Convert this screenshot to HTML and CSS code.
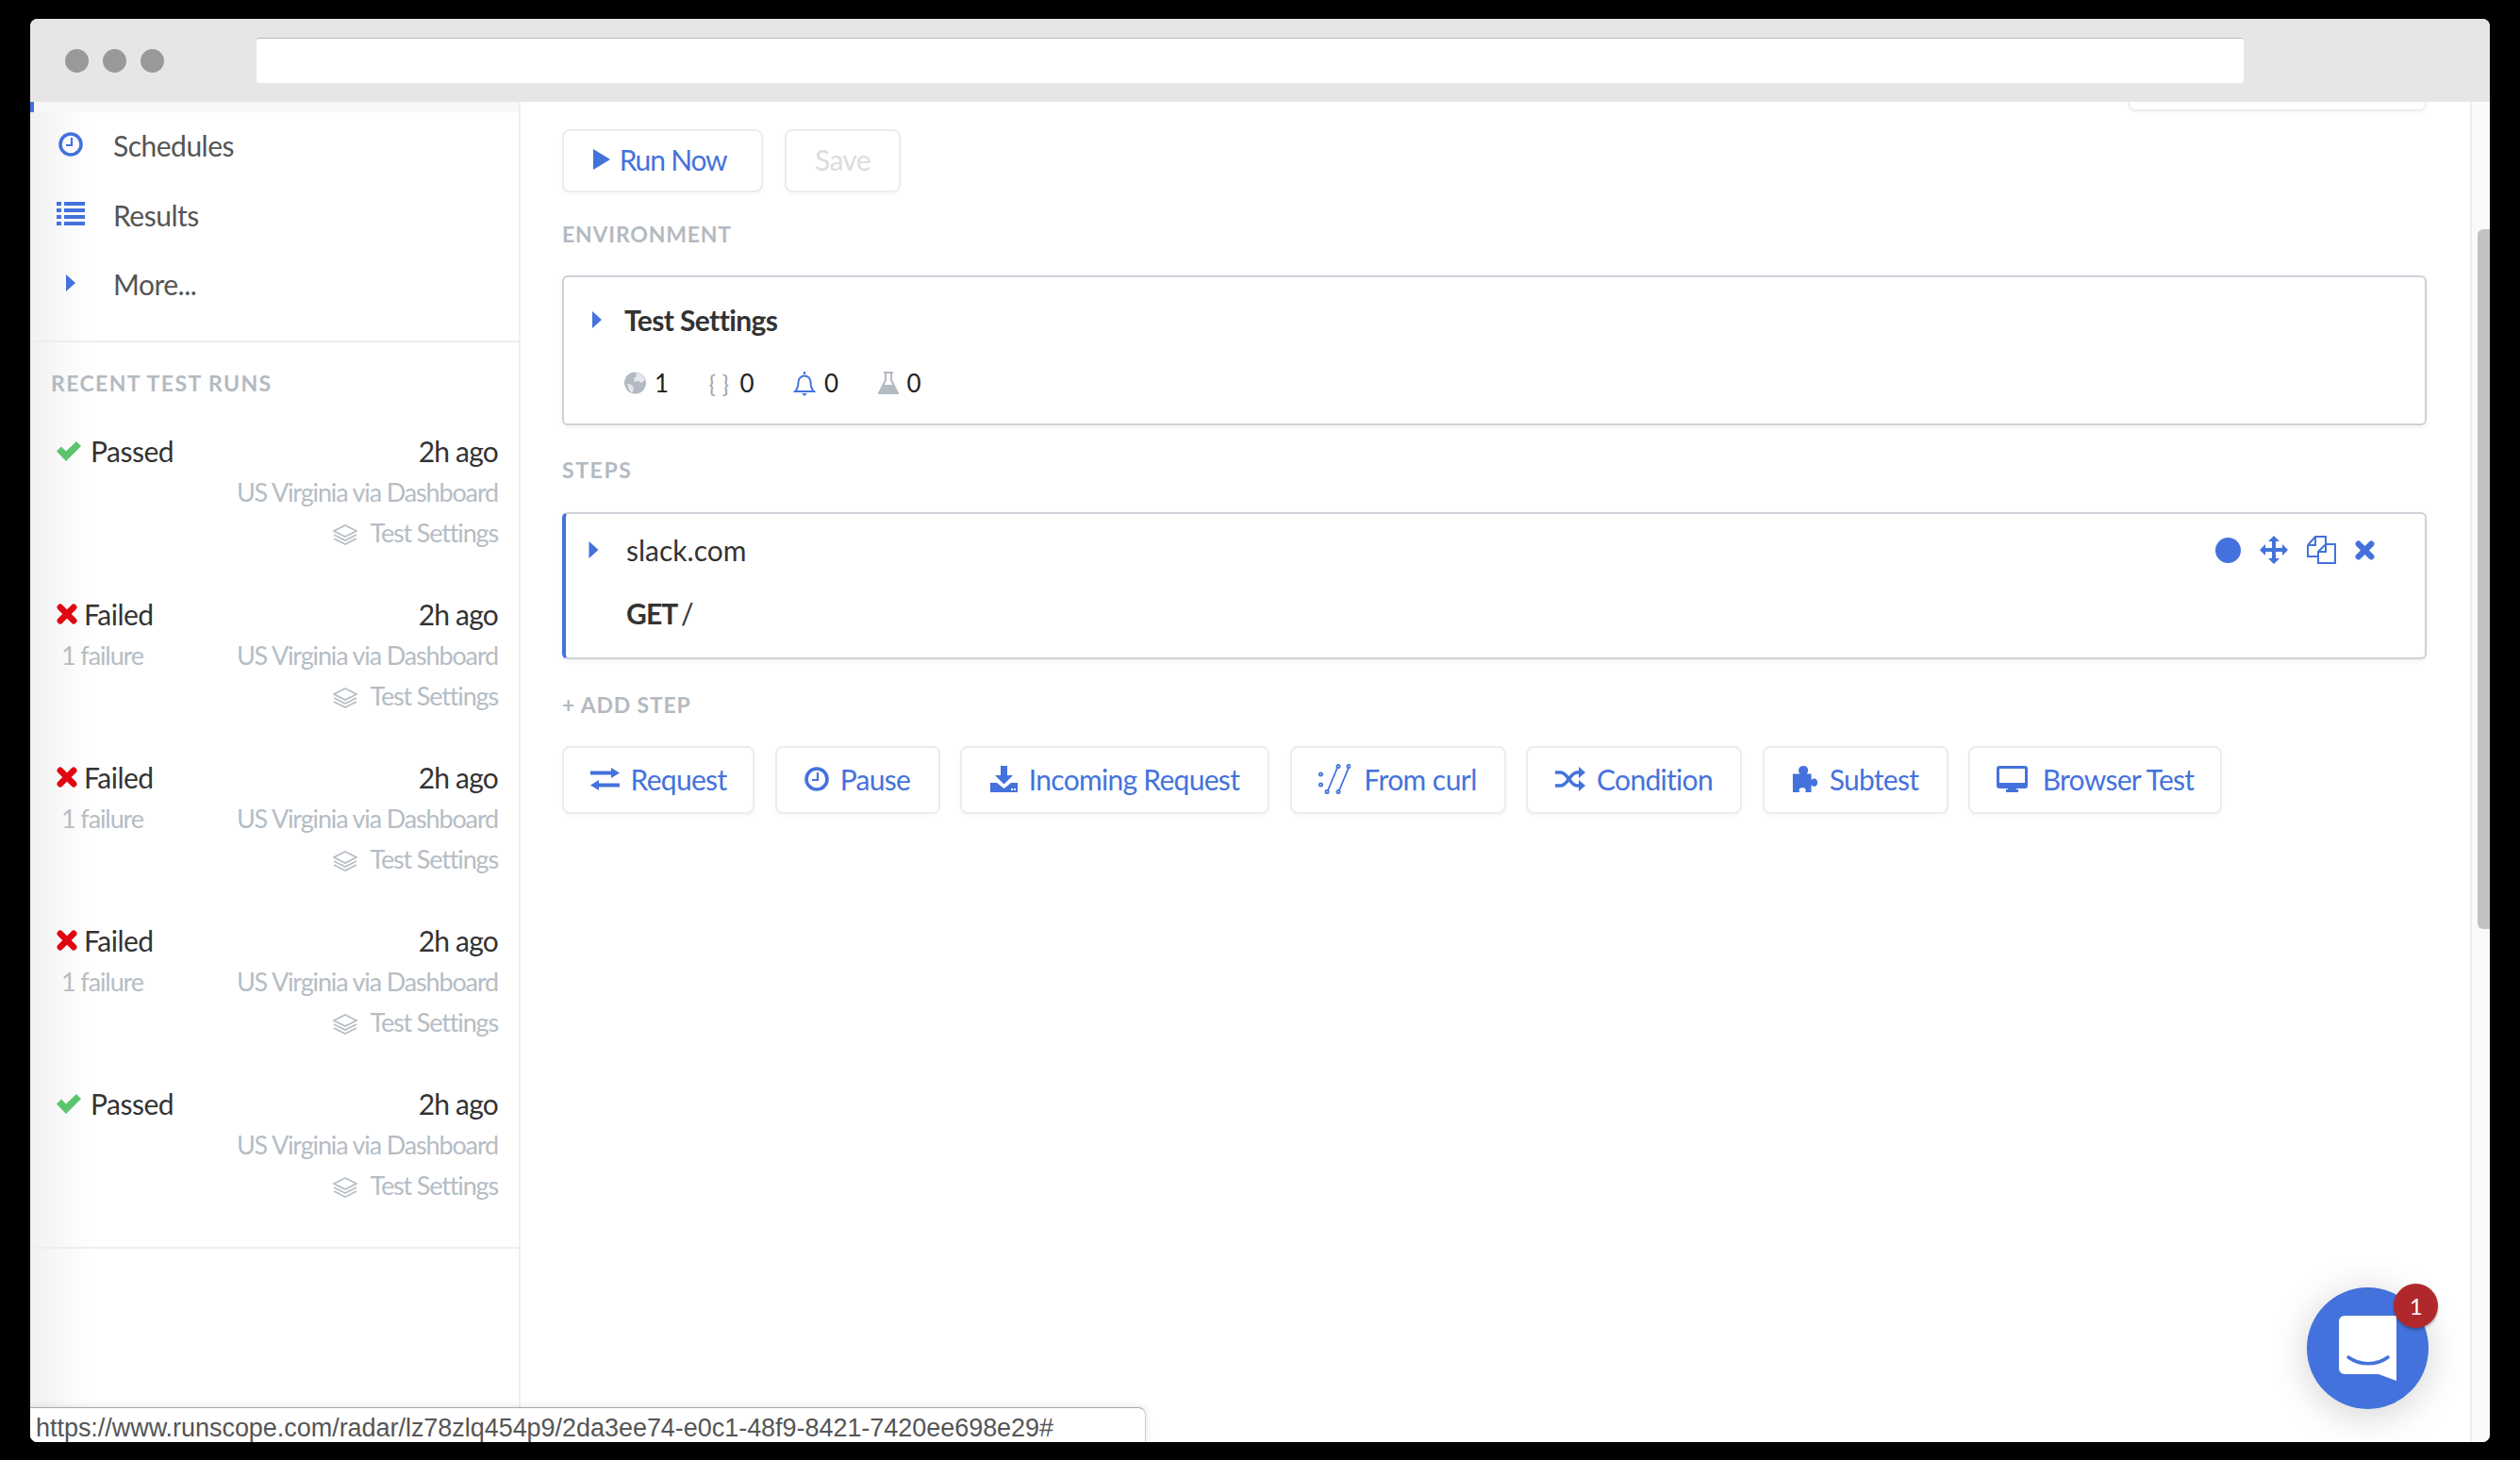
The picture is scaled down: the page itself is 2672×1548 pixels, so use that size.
FILE: index.html
```html
<!DOCTYPE html>
<html lang="en">

<head>
    <meta charset="UTF-8">
    <title>Runscope</title>
    <link rel="stylesheet" href="styles.css">
</head>

<body>
    <svg class="sprite" xmlns="http://www.w3.org/2000/svg">
        <symbol id="i-caret" viewBox="0 0 10 18"><path d="M0 0l10 9-10 9z" fill="currentColor"/></symbol>
        <symbol id="i-clock" viewBox="0 0 26 26"><circle cx="13" cy="13" r="11" fill="none" stroke="currentColor" stroke-width="3.6"/><path d="M14 6v8H8" fill="none" stroke="currentColor" stroke-width="2.2"/></symbol>
        <symbol id="i-check" viewBox="0 0 26 21"><path d="M0 10.500l5-5 5 5L21 0l5 5-16 16z" fill="#5cc46e"/></symbol>
        <symbol id="i-cross" viewBox="0 0 20 20"><path d="M3.500 3.500l13 13M16.500 3.500l-13 13" fill="none" stroke="currentColor" stroke-width="6" stroke-linecap="round"/></symbol>
        <symbol id="i-layers" viewBox="0 0 26 22"><path d="M13 1l12 6-12 6-12-6zM1 11l12 6 12-6M1 15l12 6 12-6" fill="none" stroke="#b5bdc5" stroke-width="1.6"/></symbol>
    </svg>

    <div class="window">
        <div class="titlebar">
            <span class="dot"></span>
            <span class="dot"></span>
            <span class="dot"></span>
            <div class="urlbar"></div>
        </div>

        <div class="content">
            <div class="sidebar">
                <div class="strip"></div>
                <ul class="nav">
                    <li>
                        <span class="nav-icon"><svg width="26" height="26"><use href="#i-clock"/></svg></span>
                        Schedules
                    </li>
                    <li>
                        <span class="nav-icon">
                            <svg width="30" height="25" viewBox="0 0 30 25" fill="currentColor">
                                <path d="M0 0h5v4H0zM8 0h22v4H8zM0 7h5v4H0zM8 7h22v4H8zM0 14h5v4H0zM8 14h22v4H8zM0 21h5v4H0zM8 21h22v4H8z"/>
                            </svg>
                        </span>
                        Results
                    </li>
                    <li>
                        <span class="nav-icon"><svg width="10" height="18"><use href="#i-caret"/></svg></span>
                        More...
                    </li>
                </ul>

                <div class="recent">
                    <h4 class="label recent-title">RECENT TEST RUNS</h4>

                    <div class="run">
                        <div class="run-left">
                            <div class="status passed"><svg width="26" height="21"><use href="#i-check"/></svg>Passed</div>
                        </div>
                        <div class="run-right">
                            <div class="time">2h ago</div>
                            <div>US Virginia via Dashboard</div>
                            <div><svg class="layers" width="26" height="22"><use href="#i-layers"/></svg>Test Settings</div>
                        </div>
                    </div>

                    <div class="run">
                        <div class="run-left">
                            <div class="status failed"><svg width="22" height="22"><use href="#i-cross"/></svg>Failed</div>
                            <div class="failures">1 failure</div>
                        </div>
                        <div class="run-right">
                            <div class="time">2h ago</div>
                            <div>US Virginia via Dashboard</div>
                            <div><svg class="layers" width="26" height="22"><use href="#i-layers"/></svg>Test Settings</div>
                        </div>
                    </div>

                    <div class="run">
                        <div class="run-left">
                            <div class="status failed"><svg width="22" height="22"><use href="#i-cross"/></svg>Failed</div>
                            <div class="failures">1 failure</div>
                        </div>
                        <div class="run-right">
                            <div class="time">2h ago</div>
                            <div>US Virginia via Dashboard</div>
                            <div><svg class="layers" width="26" height="22"><use href="#i-layers"/></svg>Test Settings</div>
                        </div>
                    </div>

                    <div class="run">
                        <div class="run-left">
                            <div class="status failed"><svg width="22" height="22"><use href="#i-cross"/></svg>Failed</div>
                            <div class="failures">1 failure</div>
                        </div>
                        <div class="run-right">
                            <div class="time">2h ago</div>
                            <div>US Virginia via Dashboard</div>
                            <div><svg class="layers" width="26" height="22"><use href="#i-layers"/></svg>Test Settings</div>
                        </div>
                    </div>

                    <div class="run">
                        <div class="run-left">
                            <div class="status passed"><svg width="26" height="21"><use href="#i-check"/></svg>Passed</div>
                        </div>
                        <div class="run-right">
                            <div class="time">2h ago</div>
                            <div>US Virginia via Dashboard</div>
                            <div><svg class="layers" width="26" height="22"><use href="#i-layers"/></svg>Test Settings</div>
                        </div>
                    </div>
                </div>
            </div>

            <div class="main">
                <div class="top-card"></div>

                <div class="btn-row">
                    <div class="btn btn-run">
                        <svg width="18" height="22" viewBox="0 0 18 22"><path d="M0 0l18 11L0 22z" fill="currentColor"/></svg>
                        Run Now
                    </div>
                    <div class="btn btn-save">Save</div>
                </div>

                <h4 class="label env-label">ENVIRONMENT</h4>
                <div class="card settings">
                    <div class="settings-head">
                        <svg class="caret" width="10" height="18"><use href="#i-caret"/></svg>
                        Test Settings
                    </div>
                    <div class="stats">
                        <div class="stat">
                            <svg width="23" height="24" viewBox="0 0 23 24">
                                <circle cx="11.5" cy="12" r="11.5" fill="#b3bac1"/>
                                <path d="M12 1c4 0 9 3 10 8l-4 3-3-2-4 1-1-4 3-2zM3 13l5 1 2 4-2 5-3-4z" fill="#e4e7ea"/>
                            </svg>
                            1
                        </div>
                        <div class="stat">
                            <span class="braces">{ }</span>
                            0
                        </div>
                        <div class="stat">
                            <svg width="24" height="27" viewBox="0 0 24 27">
                                <path d="M12 1v3M2 22c3-3 3.500-6 3.500-10a6.500 6.500 0 0 1 13 0c0 4 .5 7 3.500 10z" fill="none" stroke="#4472dc" stroke-width="2"/>
                                <path d="M9 24h6l-3 3z" fill="#4472dc"/>
                            </svg>
                            0
                        </div>
                        <div class="stat">
                            <svg width="22" height="24" viewBox="0 0 22 24">
                                <path d="M6 1h10M8 1v8L1 23h20L14 9V1" fill="none" stroke="#b3bac1" stroke-width="2"/>
                                <path d="M5 14h12l5 10H0z" fill="#b3bac1"/>
                            </svg>
                            0
                        </div>
                    </div>
                </div>

                <h4 class="label steps-label">STEPS</h4>
                <div class="card step">
                    <div class="step-head">
                        <svg class="caret" width="11" height="18"><use href="#i-caret"/></svg>
                        <span class="step-name">slack.com</span>
                        <div class="step-actions">
                            <span class="record"></span>
                            <svg width="30" height="30" viewBox="0 0 30 30">
                                <path d="M15 0l6 6h-4v7h7V9l6 6-6 6v-4h-7v7h4l-6 6-6-6h4v-7H6v4l-6-6 6-6v4h7V6H9z" fill="currentColor"/>
                            </svg>
                            <svg width="31" height="30" viewBox="0 0 31 30" fill="none" stroke="currentColor" stroke-width="2">
                                <path d="M1 10l8-9h11v8M1 10v12h10M9 1v9H1"/>
                                <path d="M20 9h10v20H12V17zM20 9v8h-8"/>
                            </svg>
                            <svg width="21" height="21"><use href="#i-cross"/></svg>
                        </div>
                    </div>
                    <div class="step-url"><b>GET</b> /</div>
                </div>

                <h4 class="label add-label">+ ADD STEP</h4>
                <div class="add-row">
                    <div class="btn btn-request">
                        <svg width="31" height="24" viewBox="0 0 31 24"><path d="M0 3.500h22V0l9 5.500-9 5.500V7.500H0zM31 16.500H9V13l-9 5.500L9 24v-3.500h22z" fill="currentColor"/></svg>
                        Request
                    </div>
                    <div class="btn btn-pause">
                        <svg width="26" height="26"><use href="#i-clock"/></svg>
                        Pause
                    </div>
                    <div class="btn btn-incoming">
                        <svg width="29" height="28" viewBox="0 0 29 28">
                            <path d="M11 0h7v10h6l-9.500 9.500L5 10h6zM0 18h7l7.500 6 7.500-6h7v10H0z" fill="currentColor"/>
                            <path d="M22 24h2v2h-2zM25 24h2v2h-2z" fill="#fff"/>
                        </svg>
                        Incoming Request
                    </div>
                    <div class="btn btn-curl">
                        <svg width="34" height="32" viewBox="0 0 34 32" fill="none" stroke="currentColor" stroke-width="1.800">
                            <circle cx="2.500" cy="11" r="1.600"/>
                            <circle cx="2.500" cy="22" r="1.600"/>
                            <path d="M20 4L10 28M32 4L22 28"/>
                            <circle cx="21" cy="2.500" r="1.600"/>
                            <circle cx="32" cy="2.500" r="1.600"/>
                            <circle cx="9" cy="29.500" r="1.600"/>
                            <circle cx="21" cy="29.500" r="1.600"/>
                        </svg>
                        From curl
                    </div>
                    <div class="btn btn-condition">
                        <svg width="32" height="26" viewBox="0 0 32 26">
                            <path d="M0 6h6c7 0 10 14 17 14h3M0 20h6c7 0 10-14 17-14h3" fill="none" stroke="currentColor" stroke-width="3.600"/>
                            <path d="M25 0l7 6-7 6zM25 14l7 6-7 6z" fill="currentColor"/>
                        </svg>
                        Condition
                    </div>
                    <div class="btn btn-subtest">
                        <svg width="28" height="28" viewBox="0 0 28 30"><path d="M0 9h8c-3-4-1-9 4-9s7 5 4 9h5v7c4-3 7-1 7 3s-3 6-7 3v8h-7c2-3 0-5-3-5s-5 2-3 5H0z" fill="currentColor"/></svg>
                        Subtest
                    </div>
                    <div class="btn btn-browser">
                        <svg width="33" height="28" viewBox="0 0 33 28"><path fill-rule="evenodd" d="M3 0h27a3 3 0 0 1 3 3v18a3 3 0 0 1-3 3h-9v1h2v3H10v-3h2v-1H3a3 3 0 0 1-3-3V3a3 3 0 0 1 3-3zM3 3v15h27V3z" fill="currentColor"/></svg>
                        Browser Test
                    </div>
                </div>
            </div>

            <div class="scroll-col">
                <div class="thumb"></div>
            </div>
        </div>

        <div class="statusbar">https://www.runscope.com/radar/lz78zlq454p9/2da3ee74-e0c1-48f9-8421-7420ee698e29#</div>

        <div class="chat">
            <svg width="61" height="69" viewBox="0 0 61 69">
                <path d="M6 0h55v69l-19-7H6a6 6 0 0 1-6-6V6a6 6 0 0 1 6-6z" fill="#fff"/>
                <path d="M10 44c12 9 30 9 42 0" fill="none" stroke="#4472dc" stroke-width="3.500" stroke-linecap="round"/>
            </svg>
            <span class="badge">1</span>
        </div>
    </div>
</body>

</html>
```

FILE: styles.css
```css
* {
    margin: 0;
    padding: 0;
    box-sizing: border-box;
}

body {
    background: #000;
    font-family: "Lato", "Noto Sans", sans-serif;
    font-size: 30px;
    letter-spacing: -.5px;
    color: #333;
}

.sprite {
    display: none;
}

.window {
    position: relative;
    display: flex;
    flex-direction: column;
    margin: 20px 32px 0;
    width: 2608px;
    height: 1509px;
    background: #fff;
    border-radius: 8px;
    overflow: hidden;
}

/* browser chrome */
.titlebar {
    display: flex;
    align-items: center;
    flex: none;
    height: 88px;
    padding-left: 37px;
    background: #e6e6e6;
}

.dot {
    width: 25px;
    height: 25px;
    margin-right: 15px;
    border-radius: 50%;
    background: #999;
}

.urlbar {
    width: 2107px;
    height: 48px;
    margin-left: 83px;
    background: #fff;
    border-top: 1px solid #bbb;
    border-radius: 3px;
}

.content {
    display: flex;
    flex: 1;
    min-height: 0;
}

/* sidebar */
.sidebar {
    flex: none;
    width: 520px;
    border-right: 2px solid #eee;
    background: linear-gradient(90deg, #f1f1f1, #fff 65px);
}

.strip {
    height: 11px;
    background: #f8f8f8;
    border-left: 4px solid #4472dc;
}

.nav {
    padding-bottom: 21px;
    border-bottom: 2px solid #eee;
    list-style: none;
}

.nav li {
    display: flex;
    align-items: center;
    height: 73.5px;
    padding: 0 0 3px 28px;
    color: #555;
}

.nav-icon {
    display: flex;
    justify-content: center;
    width: 30px;
    margin-right: 30px;
    margin-bottom: 3px;
    color: #4472dc;
}

.label {
    font-size: 23px;
    font-weight: 700;
    line-height: 30px;
    letter-spacing: .8px;
    color: #b3bac1;
}

.recent {
    padding-bottom: 44px;
    border-bottom: 2px solid #eee;
}

.recent-title {
    padding: 28px 0 0 22px;
    margin-bottom: 36px;
    letter-spacing: 1.4px;
}

.run {
    display: flex;
    justify-content: space-between;
    height: 173px;
    padding: 0 22px 0 28px;
    line-height: 43px;
}

.run:last-child {
    height: 129px;
}

.status {
    display: flex;
    align-items: center;
}

.status.passed svg {
    margin-right: 10px;
}

.status.failed svg {
    margin-right: 7px;
    color: #e00712;
}

.failures {
    padding-left: 5px;
    font-size: 27px;
    letter-spacing: -1.1px;
    color: #b5bdc5;
}

.run-right {
    font-size: 27px;
    letter-spacing: -1.15px;
    text-align: right;
    color: #b5bdc5;
}

.run-right .time {
    font-size: 30px;
    letter-spacing: -.8px;
    color: #333;
}

.layers {
    margin-right: 13px;
    vertical-align: -3px;
}

/* main column */
.main {
    flex: 1;
    padding: 0 46px 0 44px;
    border-right: 2px solid #eee;
}

.top-card {
    width: 317px;
    height: 10px;
    margin: 0 0 19px auto;
    border: 2px solid #eee;
    border-top: 0;
    border-radius: 0 0 8px 8px;
    box-shadow: 0 2px 4px rgba(0, 0, 0, .03);
}

.btn-row {
    display: flex;
    gap: 23px;
}

.btn {
    display: flex;
    align-items: center;
    justify-content: center;
    gap: 12px;
    height: 100%;
    padding-bottom: 3px;
    letter-spacing: -.7px;
    color: #4472dc;
    background: #fff;
    border: 2px solid #ececec;
    border-radius: 8px;
    box-shadow: 0 2px 4px rgba(0, 0, 0, .03);
    white-space: nowrap;
}

.btn svg {
    margin-top: 1px;
}

.btn-row .btn {
    height: 67px;
}

.btn-run {
    width: 213px;
    padding-right: 6px;
    gap: 10px;
    letter-spacing: -1.2px;
}

.btn-run svg {
    margin-top: -1px;
}

.btn-save {
    width: 123px;
    color: #ddd;
}

.env-label {
    margin: 29px 0;
}

.card {
    background: #fff;
    border: 2px solid #ccd3d9;
    border-radius: 6px;
    box-shadow: 0 2px 5px rgba(0, 0, 0, .06);
}

.settings {
    height: 159px;
    padding: 25px 30px 0;
}

.settings-head {
    display: flex;
    align-items: center;
    height: 40px;
    font-weight: 700;
    letter-spacing: -.6px;
    color: #333;
}

.caret {
    color: #4472dc;
}

.settings-head .caret {
    margin-right: 24px;
}

.stats {
    display: flex;
    height: 40px;
    margin-top: 27px;
    margin-left: 34px;
    font-size: 26px;
    color: #222;
}

.stat {
    display: flex;
    align-items: center;
    gap: 9px;
    width: 89.5px;
}

.braces {
    width: 24px;
    font-size: 25px;
    letter-spacing: 0;
    white-space: nowrap;
    color: #a0a8b0;
}

.steps-label {
    margin: 32px 0 30px;
    letter-spacing: 1.6px;
}

.step {
    height: 156px;
    padding: 18px 53px 0 24px;
    border-left: 4px solid #4472dc;
}

.step-head {
    display: flex;
    align-items: center;
    height: 40px;
}

.step-name {
    margin-left: 29px;
    letter-spacing: 0;
}

.step-actions {
    display: flex;
    align-items: center;
    gap: 20px;
    margin-left: auto;
    color: #4472dc;
}

.record {
    width: 27px;
    height: 27px;
    border-radius: 50%;
    background: #4472dc;
}

.step-url {
    height: 40px;
    margin-top: 27px;
    margin-left: 40px;
    line-height: 40px;
    letter-spacing: -.9px;
    word-spacing: -3px;
}

.add-label {
    margin: 33px 0 29px;
}

.add-row {
    display: flex;
    gap: 21.5px;
    height: 72px;
}

.btn-request { width: 204px; }
.btn-pause { width: 175px; }
.btn-incoming { width: 328px; }
.btn-curl { width: 229px; gap: 14px; letter-spacing: -.55px; }
.btn-condition { width: 229px; }
.btn-subtest { width: 197px; }
.btn-browser { width: 269px; gap: 16px; }

/* overlays */
.statusbar {
    position: absolute;
    left: 0;
    bottom: 0;
    width: 1183px;
    height: 37px;
    padding-left: 6px;
    font-family: "Liberation Sans", sans-serif;
    font-size: 27px;
    letter-spacing: -.04px;
    line-height: 42px;
    color: #555;
    background: #fff;
    border-top: 1px solid #aaa;
    border-right: 1px solid #ccc;
    border-radius: 0 8px 0 0;
    box-shadow: 0 0 8px rgba(0, 0, 0, .12);
}

.scroll-col {
    position: relative;
    flex: none;
    width: 19px;
    background: #fafafa;
}

.thumb {
    position: absolute;
    top: 135px;
    right: 0;
    width: 13px;
    height: 742px;
    background: #c2c2c2;
    border-radius: 6px 0 0 6px;
}

.chat {
    position: absolute;
    right: 65px;
    bottom: 35px;
    display: flex;
    align-items: center;
    justify-content: center;
    width: 129px;
    height: 129px;
    background: #4472dc;
    border-radius: 50%;
    box-shadow: 0 6px 40px rgba(0, 0, 0, .18);
}

.badge {
    position: absolute;
    top: -4px;
    left: 92px;
    width: 47px;
    height: 47px;
    font-size: 24px;
    line-height: 47px;
    text-align: center;
    color: #fff;
    background: #b0282c;
    border-radius: 50%;
    box-shadow: 0 2px 3px rgba(0, 0, 0, .3);
}
```
